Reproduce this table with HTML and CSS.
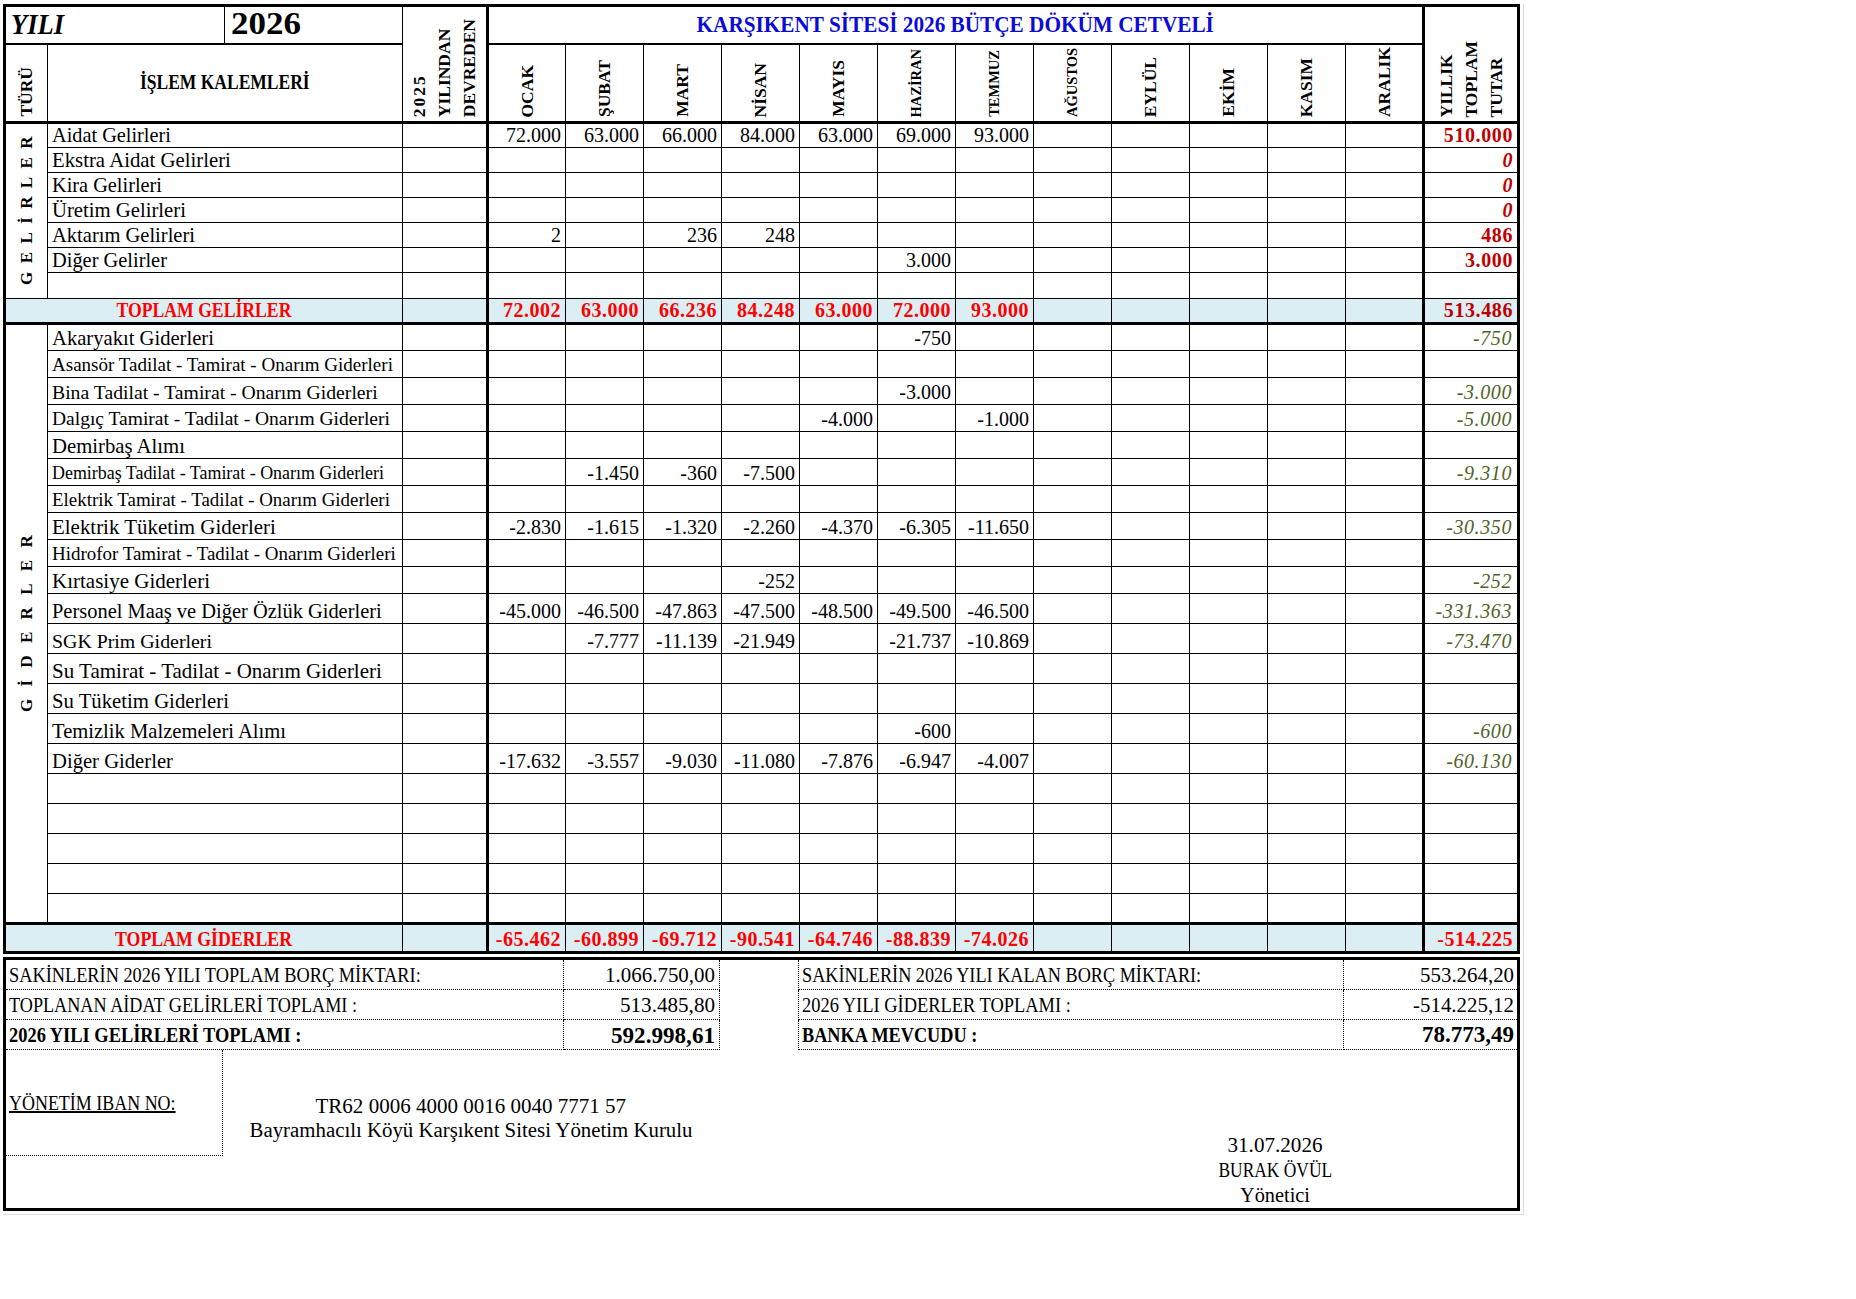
FILE: index.html
```html
<!DOCTYPE html>
<html lang="tr">
<head>
<meta charset="utf-8">
<title>Karşıkent Sitesi 2026 Bütçe Döküm Cetveli</title>
<link rel="stylesheet" href="styles.css">
</head>
<body>
<div class="sheet">
<table class="budget">
<colgroup>
<col class="c-tur"><col class="c-ia"><col class="c-ib"><col class="c-prev">
<col class="c-m"><col class="c-m"><col class="c-m"><col class="c-m"><col class="c-m"><col class="c-m"><col class="c-m"><col class="c-m"><col class="c-m"><col class="c-m"><col class="c-m"><col class="c-m">
<col class="c-tot">
</colgroup>
<thead>
<tr class="r-top">
<th colspan="2" class="yili"><span data-sx="53">YILI</span></th>
<th class="year"><span data-sx="70">2026</span></th>
<th rowspan="2" class="vh"><span class="vt"><span class="ls">2025</span><br>YILINDAN<br>DEVREDEN</span></th>
<th colspan="12" class="title"><span class="sxc" data-sx="517">KARŞIKENT SİTESİ 2026 BÜTÇE DÖKÜM CETVELİ</span></th>
<th rowspan="2" class="vh"><span class="vt">YILLIK<br>TOPLAM<br>TUTAR</span></th>
</tr>
<tr class="r-head">
<th class="vh"><span class="vt">TÜRÜ</span></th>
<th colspan="2" class="items-h"><span class="sxc" data-sx="170">İŞLEM KALEMLERİ</span></th>
<th class="vh"><span class="vt">OCAK</span></th>
<th class="vh"><span class="vt">ŞUBAT</span></th>
<th class="vh"><span class="vt">MART</span></th>
<th class="vh"><span class="vt">NİSAN</span></th>
<th class="vh"><span class="vt">MAYIS</span></th>
<th class="vh"><span class="vt vt-sm">HAZİRAN</span></th>
<th class="vh"><span class="vt vt-sm">TEMMUZ</span></th>
<th class="vh"><span class="vt vt-sm">AĞUSTOS</span></th>
<th class="vh"><span class="vt">EYLÜL</span></th>
<th class="vh"><span class="vt">EKİM</span></th>
<th class="vh"><span class="vt">KASIM</span></th>
<th class="vh"><span class="vt">ARALIK</span></th>
</tr>
</thead>
<tbody>
<tr class="g">
<th rowspan="7" class="side"><span class="vt vt-side sp-gel">GELİRLER</span></th>
<td colspan="2" class="lbl"><span data-fit="119">Aidat Gelirleri</span></td><td></td>
<td>72.000</td><td>63.000</td><td>66.000</td><td>84.000</td><td>63.000</td><td>69.000</td><td>93.000</td><td></td><td></td><td></td><td></td><td></td>
<td class="inc">510.000</td>
</tr>
<tr class="g">
<td colspan="2" class="lbl"><span data-fit="179">Ekstra Aidat Gelirleri</span></td><td></td>
<td></td><td></td><td></td><td></td><td></td><td></td><td></td><td></td><td></td><td></td><td></td><td></td>
<td class="inc it">0</td>
</tr>
<tr class="g">
<td colspan="2" class="lbl"><span data-fit="110">Kira Gelirleri</span></td><td></td>
<td></td><td></td><td></td><td></td><td></td><td></td><td></td><td></td><td></td><td></td><td></td><td></td>
<td class="inc it">0</td>
</tr>
<tr class="g">
<td colspan="2" class="lbl"><span data-fit="134">Üretim Gelirleri</span></td><td></td>
<td></td><td></td><td></td><td></td><td></td><td></td><td></td><td></td><td></td><td></td><td></td><td></td>
<td class="inc it">0</td>
</tr>
<tr class="g">
<td colspan="2" class="lbl"><span data-fit="143">Aktarım Gelirleri</span></td><td></td>
<td>2</td><td></td><td>236</td><td>248</td><td></td><td></td><td></td><td></td><td></td><td></td><td></td><td></td>
<td class="inc">486</td>
</tr>
<tr class="g">
<td colspan="2" class="lbl"><span data-fit="115">Diğer Gelirler</span></td><td></td>
<td></td><td></td><td></td><td></td><td></td><td>3.000</td><td></td><td></td><td></td><td></td><td></td><td></td>
<td class="inc">3.000</td>
</tr>
<tr class="g g-last">
<td colspan="2" class="lbl"></td><td></td>
<td></td><td></td><td></td><td></td><td></td><td></td><td></td><td></td><td></td><td></td><td></td><td></td>
<td></td>
</tr>
<tr class="tot-row gt">
<td colspan="3" class="tl"><span class="sxc" data-sx="175">TOPLAM GELİRLER</span></td><td></td>
<td>72.002</td><td>63.000</td><td>66.236</td><td>84.248</td><td>63.000</td><td>72.000</td><td>93.000</td><td></td><td></td><td></td><td></td><td></td>
<td class="inc">513.486</td>
</tr>

<tr class="d1">
<th rowspan="21" class="side"><span class="vt vt-side sp-gid">GİDERLER</span></th>
<td colspan="2" class="lbl"><span data-fit="162">Akaryakıt Giderleri</span></td><td></td>
<td></td><td></td><td></td><td></td><td></td><td>-750</td><td></td><td></td><td></td><td></td><td></td><td></td>
<td class="exp">-750</td>
</tr>
<tr class="d1">
<td colspan="2" class="lbl"><span data-fit="341">Asansör Tadilat - Tamirat - Onarım Giderleri</span></td><td></td>
<td></td><td></td><td></td><td></td><td></td><td></td><td></td><td></td><td></td><td></td><td></td><td></td>
<td class="exp"></td>
</tr>
<tr class="d1">
<td colspan="2" class="lbl"><span data-fit="326">Bina Tadilat - Tamirat - Onarım Giderleri</span></td><td></td>
<td></td><td></td><td></td><td></td><td></td><td>-3.000</td><td></td><td></td><td></td><td></td><td></td><td></td>
<td class="exp">-3.000</td>
</tr>
<tr class="d1">
<td colspan="2" class="lbl"><span data-fit="338">Dalgıç Tamirat - Tadilat - Onarım Giderleri</span></td><td></td>
<td></td><td></td><td></td><td></td><td>-4.000</td><td></td><td>-1.000</td><td></td><td></td><td></td><td></td><td></td>
<td class="exp">-5.000</td>
</tr>
<tr class="d1">
<td colspan="2" class="lbl"><span data-fit="133">Demirbaş Alımı</span></td><td></td>
<td></td><td></td><td></td><td></td><td></td><td></td><td></td><td></td><td></td><td></td><td></td><td></td>
<td class="exp"></td>
</tr>
<tr class="d1">
<td colspan="2" class="lbl"><span data-fit="332">Demirbaş Tadilat - Tamirat - Onarım Giderleri</span></td><td></td>
<td></td><td>-1.450</td><td>-360</td><td>-7.500</td><td></td><td></td><td></td><td></td><td></td><td></td><td></td><td></td>
<td class="exp">-9.310</td>
</tr>
<tr class="d1">
<td colspan="2" class="lbl"><span data-fit="338">Elektrik Tamirat - Tadilat - Onarım Giderleri</span></td><td></td>
<td></td><td></td><td></td><td></td><td></td><td></td><td></td><td></td><td></td><td></td><td></td><td></td>
<td class="exp"></td>
</tr>
<tr class="d1">
<td colspan="2" class="lbl"><span data-fit="224">Elektrik Tüketim Giderleri</span></td><td></td>
<td>-2.830</td><td>-1.615</td><td>-1.320</td><td>-2.260</td><td>-4.370</td><td>-6.305</td><td>-11.650</td><td></td><td></td><td></td><td></td><td></td>
<td class="exp">-30.350</td>
</tr>
<tr class="d1">
<td colspan="2" class="lbl"><span data-fit="344">Hidrofor Tamirat - Tadilat - Onarım Giderleri</span></td><td></td>
<td></td><td></td><td></td><td></td><td></td><td></td><td></td><td></td><td></td><td></td><td></td><td></td>
<td class="exp"></td>
</tr>
<tr class="d1">
<td colspan="2" class="lbl"><span data-fit="158">Kırtasiye Giderleri</span></td><td></td>
<td></td><td></td><td></td><td>-252</td><td></td><td></td><td></td><td></td><td></td><td></td><td></td><td></td>
<td class="exp">-252</td>
</tr>
<tr class="d2">
<td colspan="2" class="lbl"><span data-fit="330">Personel Maaş ve Diğer Özlük Giderleri</span></td><td></td>
<td>-45.000</td><td>-46.500</td><td>-47.863</td><td>-47.500</td><td>-48.500</td><td>-49.500</td><td>-46.500</td><td></td><td></td><td></td><td></td><td></td>
<td class="exp">-331.363</td>
</tr>
<tr class="d2">
<td colspan="2" class="lbl"><span data-fit="160">SGK Prim Giderleri</span></td><td></td>
<td></td><td>-7.777</td><td>-11.139</td><td>-21.949</td><td></td><td>-21.737</td><td>-10.869</td><td></td><td></td><td></td><td></td><td></td>
<td class="exp">-73.470</td>
</tr>
<tr class="d2">
<td colspan="2" class="lbl"><span data-fit="330">Su Tamirat - Tadilat - Onarım Giderleri</span></td><td></td>
<td></td><td></td><td></td><td></td><td></td><td></td><td></td><td></td><td></td><td></td><td></td><td></td>
<td class="exp"></td>
</tr>
<tr class="d2">
<td colspan="2" class="lbl"><span data-fit="177">Su Tüketim Giderleri</span></td><td></td>
<td></td><td></td><td></td><td></td><td></td><td></td><td></td><td></td><td></td><td></td><td></td><td></td>
<td class="exp"></td>
</tr>
<tr class="d2">
<td colspan="2" class="lbl"><span data-fit="234">Temizlik Malzemeleri Alımı</span></td><td></td>
<td></td><td></td><td></td><td></td><td></td><td>-600</td><td></td><td></td><td></td><td></td><td></td><td></td>
<td class="exp">-600</td>
</tr>
<tr class="d2">
<td colspan="2" class="lbl"><span data-fit="121">Diğer Giderler</span></td><td></td>
<td>-17.632</td><td>-3.557</td><td>-9.030</td><td>-11.080</td><td>-7.876</td><td>-6.947</td><td>-4.007</td><td></td><td></td><td></td><td></td><td></td>
<td class="exp">-60.130</td>
</tr>
<tr class="d2"><td colspan="2"></td><td></td><td></td><td></td><td></td><td></td><td></td><td></td><td></td><td></td><td></td><td></td><td></td><td></td><td></td></tr>
<tr class="d2"><td colspan="2"></td><td></td><td></td><td></td><td></td><td></td><td></td><td></td><td></td><td></td><td></td><td></td><td></td><td></td><td></td></tr>
<tr class="d2"><td colspan="2"></td><td></td><td></td><td></td><td></td><td></td><td></td><td></td><td></td><td></td><td></td><td></td><td></td><td></td><td></td></tr>
<tr class="d2"><td colspan="2"></td><td></td><td></td><td></td><td></td><td></td><td></td><td></td><td></td><td></td><td></td><td></td><td></td><td></td><td></td></tr>
<tr class="d2"><td colspan="2"></td><td></td><td></td><td></td><td></td><td></td><td></td><td></td><td></td><td></td><td></td><td></td><td></td><td></td><td></td></tr>
<tr class="tot-row dt">
<td colspan="3" class="tl"><span class="sxc" data-sx="177">TOPLAM GİDERLER</span></td><td></td>
<td>-65.462</td><td>-60.899</td><td>-69.712</td><td>-90.541</td><td>-64.746</td><td>-88.839</td><td>-74.026</td><td></td><td></td><td></td><td></td><td></td>
<td>-514.225</td>
</tr>
</tbody>
</table>

<div class="foot">
<div class="sum">
<div class="s-l"><span data-sx="412">SAKİNLERİN 2026 YILI TOPLAM BORÇ MİKTARI:</span></div>
<div class="s-v"><span data-fit="110">1.066.750,00</span></div>
<div class="s-gap"></div>
<div class="s-l s-r"><span data-sx="399">SAKİNLERİN 2026 YILI KALAN BORÇ MİKTARI:</span></div>
<div class="s-v s-rv"><span data-fit="94">553.264,20</span></div>

<div class="s-l"><span data-sx="348">TOPLANAN AİDAT GELİRLERİ TOPLAMI :</span></div>
<div class="s-v"><span data-fit="95">513.485,80</span></div>
<div class="s-gap"></div>
<div class="s-l s-r"><span data-sx="269">2026 YILI GİDERLER TOPLAMI :</span></div>
<div class="s-v s-rv"><span data-fit="101">-514.225,12</span></div>

<div class="s-l b"><span data-sx="292">2026 YILI GELİRLERİ TOPLAMI :</span></div>
<div class="s-v b"><span data-fit="104">592.998,61</span></div>
<div class="s-gap"></div>
<div class="s-l s-r b"><span data-sx="175">BANKA MEVCUDU :</span></div>
<div class="s-v s-rv b"><span data-fit="92">78.773,49</span></div>
</div>

<div class="sign-area">
<div class="iban-box"><span class="iban-label" data-sx="167">YÖNETİM IBAN NO:</span></div>
<div class="iban-mid">
<div><span class="sxc" data-sx="311">TR62 0006 4000 0016 0040 7771 57</span></div>
<div><span data-fit="443">Bayramhacılı Köyü Karşıkent Sitesi Yönetim Kurulu</span></div>
</div>
<div class="signer">
<div><span data-fit="95">31.07.2026</span></div>
<div><span class="sxc" data-sx="114">BURAK ÖVÜL</span></div>
<div><span data-fit="70">Yönetici</span></div>
</div>
</div>
</div>
</div>
<script src="script.js"></script>
</body>
</html>
```

FILE: styles.css
```css
* { box-sizing: border-box; }
html, body { margin: 0; background: #fff; }
body {
  padding: 4px 0 0 3px;
  font-family: "Liberation Serif", "Times New Roman", serif;
  color: #000;
}

.sheet {
  width: 1521px;
  padding-bottom: 3px;
  border-right: 1px solid #dadada;
  border-bottom: 1px solid #dadada;
}

/* scaled-to-width text (origin depends on alignment) */
[data-sx] {
  display: inline-block;
  transform-origin: left center;
  white-space: nowrap;
}
[data-sx].sxc { transform-origin: center center; }

/* ---------- main table ---------- */
.budget {
  border-collapse: collapse;
  table-layout: fixed;
  width: 1514px;
  border: 3px solid #000;
}
.c-tur { width: 43px; }
.c-ia { width: 177px; }
.c-ib { width: 178px; }
.c-prev { width: 85px; border-right: 3px solid #000; }
.c-m { width: 78px; }
.c-tot { width: 95px; border-left: 3px solid #000; }

.budget th,
.budget td {
  border: 1px solid #000;
  padding: 0 4px 1px 3px;
  white-space: nowrap;
  overflow: visible;
  font-size: 20px;
  line-height: 22px;
  vertical-align: bottom;
  text-align: right;
  font-weight: normal;
}

.r-top { height: 38px; border-bottom: 2px solid #000; }
.r-head { height: 79px; border-bottom: 3px solid #000; }
.g { height: 25px; }
.g-last { height: 26px; }
.gt { height: 25px; border-bottom: 3px solid #000; }
.d1 { height: 27px; }
.d2 { height: 30px; }
.dt { height: 29px; border-top: 3px solid #000; }

.budget .yili {
  text-align: left;
  vertical-align: middle;
  font-weight: bold;
  font-style: italic;
  font-size: 30px;
  line-height: 32px;
  padding-left: 5px;
}
.budget .year {
  text-align: left;
  vertical-align: middle;
  font-weight: bold;
  font-size: 31px;
  line-height: 32px;
  padding-left: 6px;
}
.budget .title {
  text-align: center;
  vertical-align: middle;
  font-weight: bold;
  color: #0b0bd8;
  font-size: 24px;
  line-height: 28px;
}
.budget .items-h {
  text-align: center;
  vertical-align: middle;
  font-weight: bold;
  font-size: 21px;
}

/* rotated headers */
.budget .vh {
  text-align: center;
  vertical-align: bottom;
  line-height: 0;
  padding: 0 0 4px 0;
}
.vt {
  display: inline-block;
  vertical-align: top;
  writing-mode: vertical-rl;
  transform: rotate(180deg);
  font-weight: bold;
  font-size: 17.5px;
  line-height: 25px;
  white-space: nowrap;
  text-align: start;
}
.vt-sm { font-size: 14.5px; }
.ls { letter-spacing: 2px; }

.budget .side {
  text-align: center;
  vertical-align: middle;
  line-height: 0;
  padding: 0;
}
.vt-side { font-size: 17px; line-height: 20px; }
.sp-gel { letter-spacing: 8.4px; margin-bottom: 8.4px; }
.sp-gid { letter-spacing: 12.3px; margin-bottom: 12.3px; }

/* body cells */
.budget .lbl { text-align: left; padding-left: 4px; }
.budget .inc { color: #c00000; font-weight: bold; letter-spacing: 0.6px; }
.budget .it { font-style: italic; }
.budget .exp { color: #4f6228; font-style: italic; letter-spacing: 0.6px; padding-right: 5px; }

.tot-row td {
  background: #daeef3;
  color: #ff0000;
  font-weight: bold;
  letter-spacing: 0.5px;
}
.tot-row .inc { color: #c00000; }
.budget .tl { text-align: center; letter-spacing: 0; font-size: 21px; }

/* ---------- footer block ---------- */
.foot {
  width: 1517px;
  height: 254px;
  margin-top: 3px;
  border: 3px solid #000;
  display: flex;
  flex-direction: column;
}
.sum {
  display: grid;
  grid-template-columns: 558px 156px 78px 546px 1fr;
  grid-auto-rows: 30px;
}
.sum > div {
  display: flex;
  align-items: flex-end;
  padding: 0 4px 3px 3px;
  font-size: 20px;
  line-height: 22px;
  white-space: nowrap;
  border-bottom: 1px dotted #000;
}
.sum .s-l { border-right: 1px dotted #000; }
.sum .s-v { justify-content: flex-end; border-right: 1px dotted #000; }
.sum .s-gap { border-bottom: none; }
.sum .s-r { border-left: 1px dotted #000; }
.sum .s-rv { border-right: none; padding-right: 3px; }
.sum .b { font-weight: bold; }

.sign-area {
  flex: 1;
  display: flex;
  align-items: flex-start;
}
.iban-box {
  width: 217px;
  height: 106px;
  border-right: 1px dotted #000;
  border-bottom: 1px dotted #000;
  display: flex;
  align-items: center;
  padding-left: 3px;
  font-size: 20px;
  line-height: 24px;
}
.iban-label { text-decoration: underline; }
.iban-mid {
  width: 496px;
  padding-top: 44px;
  text-align: center;
  font-size: 20px;
  line-height: 24px;
  white-space: nowrap;
}
.signer {
  margin-left: auto;
  width: 484px;
  align-self: flex-end;
  text-align: center;
  font-size: 20px;
  line-height: 25px;
  white-space: nowrap;
}
```

FILE: script.js
```js
(function () {
  function run() {
    var i, el, target, w, fs;
    var fits = document.querySelectorAll('[data-fit]');
    for (i = 0; i < fits.length; i++) {
      el = fits[i];
      target = parseFloat(el.getAttribute('data-fit'));
      el.style.fontSize = '';
      w = el.getBoundingClientRect().width;
      fs = parseFloat(getComputedStyle(el).fontSize);
      if (w > 0 && target > 0) {
        el.style.fontSize = (fs * target / w).toFixed(2) + 'px';
      }
    }
    var sxs = document.querySelectorAll('[data-sx]');
    for (i = 0; i < sxs.length; i++) {
      el = sxs[i];
      target = parseFloat(el.getAttribute('data-sx'));
      el.style.transform = '';
      w = el.offsetWidth;
      if (w > 0 && target > 0) {
        el.style.transform = 'scaleX(' + (target / w).toFixed(4) + ')';
      }
    }
  }
  run();
  if (document.fonts && document.fonts.ready) {
    document.fonts.ready.then(run);
  }
})();
```
